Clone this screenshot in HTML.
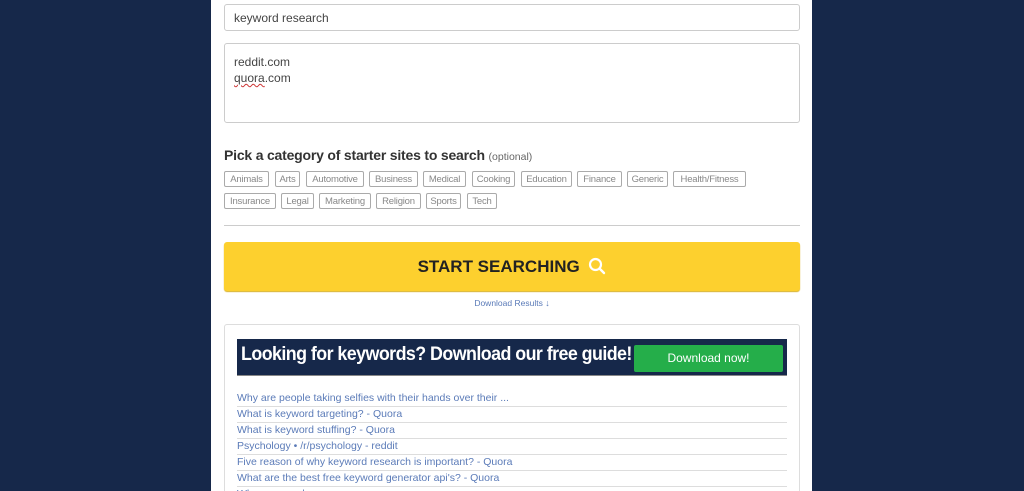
<!DOCTYPE html>
<html style="overflow:hidden;height:491px"><head><style>
*{box-sizing:border-box;margin:0;padding:0}
html,body{width:1024px;height:491px;overflow:hidden}
body{background:#16284a;font-family:"Liberation Sans",sans-serif;position:relative}
.panel{position:absolute;left:211px;top:0;width:601px;height:491px;background:#fff}
.abs{position:absolute}
.inp{left:224px;width:576px;border:1px solid #ccc;border-radius:3px;background:#fff;font-size:12px;color:#444;padding-left:9px}
.tag{position:absolute;height:16px;border:1px solid #aaa;border-radius:2px;font-size:9.5px;color:#888;line-height:15px;text-align:center;letter-spacing:-0.2px}
.li{position:absolute;left:237px;width:550px;height:16px;border-bottom:1px solid #ddd;font-size:10.5px;color:#5b7bb8;line-height:15px;white-space:nowrap;overflow:hidden}
</style></head><body>
<div class="panel"></div>
<div class="abs inp" style="top:4px;height:27px;line-height:26px">keyword research</div>
<div class="abs inp" style="top:43px;height:80px;padding-top:10px;line-height:16px">reddit.com<br><span style="text-decoration:underline wavy #c33;text-decoration-thickness:1px">quora</span>.com</div>
<div class="abs" style="left:224px;top:147px;font-size:14px;font-weight:bold;color:#333;letter-spacing:-0.2px">Pick a category of starter sites to search <span style="font-weight:normal;font-size:10.5px;color:#666;letter-spacing:0">(optional)</span></div>
<div class="tag" style="left:224px;top:171px;width:45px">Animals</div>
<div class="tag" style="left:275px;top:171px;width:25px">Arts</div>
<div class="tag" style="left:306px;top:171px;width:58px">Automotive</div>
<div class="tag" style="left:369px;top:171px;width:49px">Business</div>
<div class="tag" style="left:423px;top:171px;width:43px">Medical</div>
<div class="tag" style="left:472px;top:171px;width:43px">Cooking</div>
<div class="tag" style="left:521px;top:171px;width:51px">Education</div>
<div class="tag" style="left:577px;top:171px;width:45px">Finance</div>
<div class="tag" style="left:627px;top:171px;width:41px">Generic</div>
<div class="tag" style="left:673px;top:171px;width:73px">Health/Fitness</div>
<div class="tag" style="left:224px;top:193px;width:52px">Insurance</div>
<div class="tag" style="left:281px;top:193px;width:33px">Legal</div>
<div class="tag" style="left:319px;top:193px;width:52px">Marketing</div>
<div class="tag" style="left:376px;top:193px;width:45px">Religion</div>
<div class="tag" style="left:426px;top:193px;width:35px">Sports</div>
<div class="tag" style="left:467px;top:193px;width:30px">Tech</div>
<div class="abs" style="left:224px;top:225px;width:576px;height:1px;background:#ccc"></div>
<div class="abs" style="left:224px;top:242px;width:576px;height:49px;background:#fdd02e;border-radius:3px;box-shadow:0 1px 1px #d9b020;text-align:center;line-height:49px;font-size:17px;font-weight:bold;color:#222">START SEARCHING <svg width="18" height="18" viewBox="0 0 18 18" style="vertical-align:-3px;margin-left:4px"><circle cx="7.5" cy="7.5" r="5.5" fill="none" stroke="#fff" stroke-width="2.2"/><line x1="11.5" y1="11.5" x2="16" y2="16" stroke="#fff" stroke-width="2.4" stroke-linecap="round"/></svg></div>
<div class="abs" style="left:224px;top:298px;width:576px;text-align:center;font-size:8.5px;color:#5b7bb8">Download Results <b style="font-size:9px">&#8595;</b></div>
<div class="abs" style="left:224px;top:324px;width:576px;height:180px;border:1px solid #ddd;border-radius:3px"></div>
<div class="abs" style="left:237px;top:339px;width:550px;height:37px;background:#16284a;border-bottom:1px solid #888"></div>
<div class="abs" style="left:241px;top:344px;font-size:19px;font-weight:bold;color:#fff;letter-spacing:-0.6px;white-space:nowrap;transform:scaleX(0.94);transform-origin:left">Looking for keywords? Download our free guide!</div>
<div class="abs" style="left:634px;top:345px;width:149px;height:27px;background:#25ae4a;border-radius:2px;color:#fff;font-size:12px;text-align:center;line-height:27px">Download now!</div>
<div class="li" style="top:391px">Why are people taking selfies with their hands over their ...</div>
<div class="li" style="top:407px">What is keyword targeting? - Quora</div>
<div class="li" style="top:423px">What is keyword stuffing? - Quora</div>
<div class="li" style="top:439px">Psychology • /r/psychology - reddit</div>
<div class="li" style="top:455px">Five reason of why keyword research is important? - Quora</div>
<div class="li" style="top:471px">What are the best free keyword generator api's? - Quora</div>
<div class="li" style="top:487px">Why are people ...</div>
</body></html>
